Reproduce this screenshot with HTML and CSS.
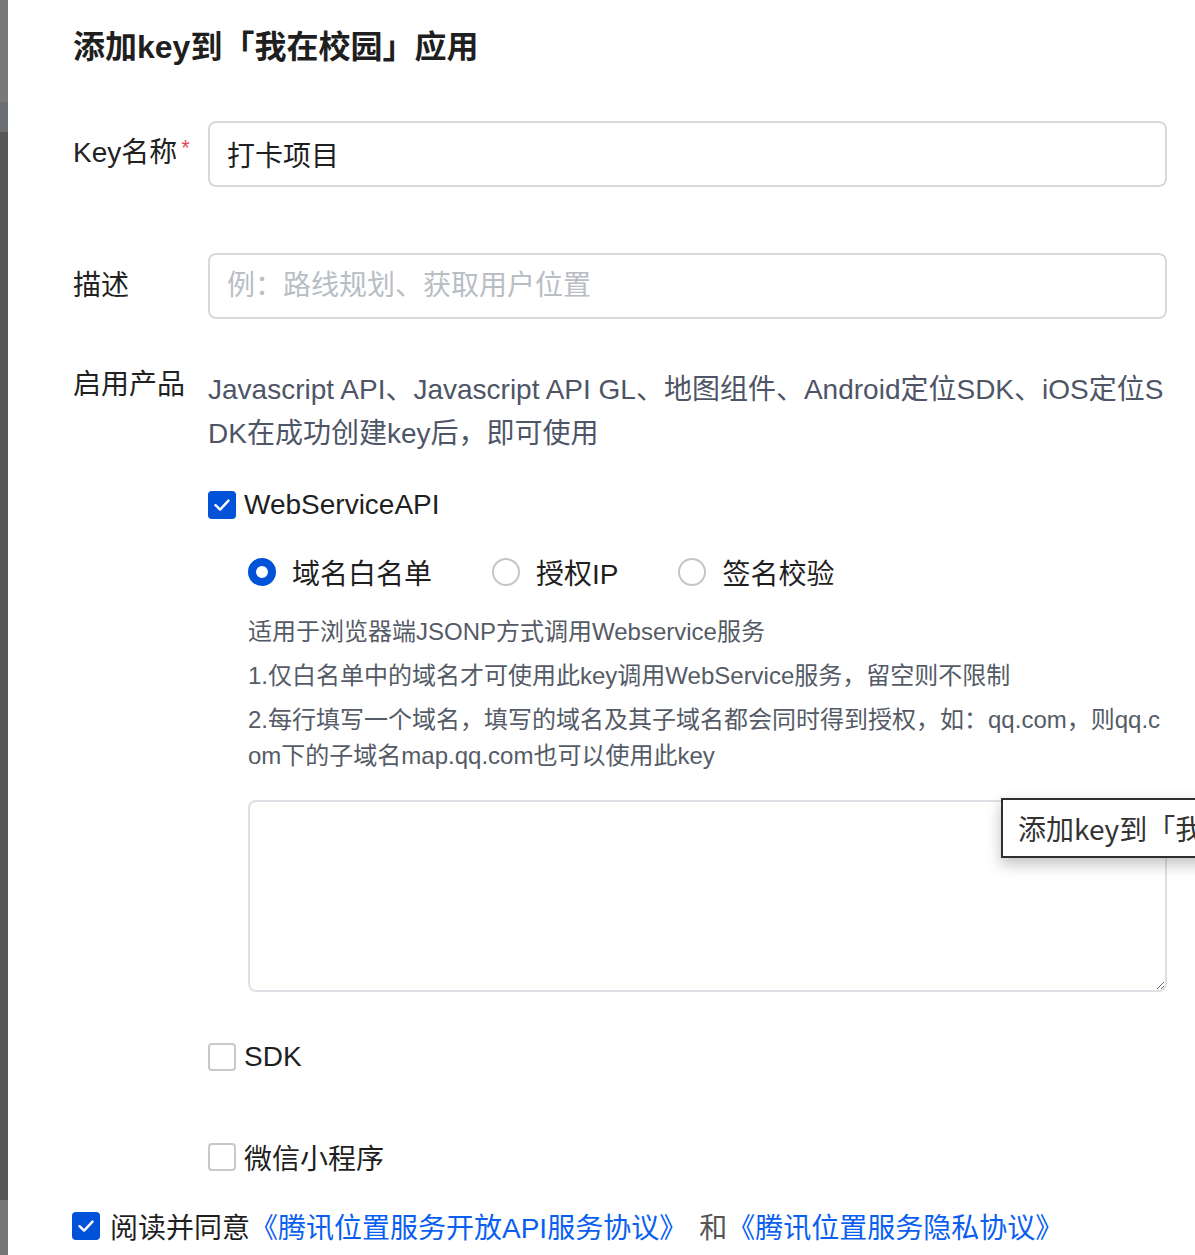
FILE: index.html
```html
<!DOCTYPE html>
<html lang="zh-CN">
<head>
<meta charset="utf-8">
<title>添加key</title>
<link rel="stylesheet" href="styles.css">
</head>
<body>
<div class="page">
  <div class="strip"></div>
  <div class="content">
    <h1 class="title">添加key到「我在校园」应用</h1>

    <div class="row row-name">
      <label class="label">Key名称<span class="req">*</span></label>
      <input class="input" type="text" value="打卡项目">
    </div>

    <div class="row row-desc">
      <label class="label">描述</label>
      <input class="input" type="text" placeholder="例：路线规划、获取用户位置">
    </div>

    <div class="row row-products">
      <label class="label label-products">启用产品</label>
      <div class="products">
        <p class="prod-desc">Javascript API、Javascript API GL、地图组件、Android定位SDK、iOS定位SDK在成功创建key后，即可使用</p>

        <div class="check-row check-ws">
          <span class="cb on"><svg viewBox="0 0 28 28" width="28" height="28"><path d="M7.5 14.2l4.6 4.4 8.4-9" fill="none" stroke="#fff" stroke-width="2.4" stroke-linecap="round" stroke-linejoin="round"/></svg></span>
          <span>WebServiceAPI</span>
        </div>

        <div class="radio-group">
          <div class="radio-item"><span class="radio on"></span><span>域名白名单</span></div>
          <div class="radio-item"><span class="radio"></span><span>授权IP</span></div>
          <div class="radio-item"><span class="radio"></span><span>签名校验</span></div>
        </div>

        <div class="help">
          <p>适用于浏览器端JSONP方式调用Webservice服务</p>
          <p>1.仅白名单中的域名才可使用此key调用WebService服务，留空则不限制</p>
          <p>2.每行填写一个域名，填写的域名及其子域名都会同时得到授权，如：qq.com，则qq.com下的子域名map.qq.com也可以使用此key</p>
        </div>

        <textarea class="domains"></textarea>

        <div class="check-row check-sdk">
          <span class="cb"></span>
          <span>SDK</span>
        </div>

        <div class="check-row check-wx">
          <span class="cb"></span>
          <span>微信小程序</span>
        </div>
      </div>
    </div>

    <div class="agree">
      <span class="cb on"><svg viewBox="0 0 28 28" width="28" height="28"><path d="M7.5 14.2l4.6 4.4 8.4-9" fill="none" stroke="#fff" stroke-width="2.4" stroke-linecap="round" stroke-linejoin="round"/></svg></span>
      <span class="agree-text">阅读并同意</span>
      <a class="link">《腾讯位置服务开放API服务协议》</a>
      <span class="and">和</span>
      <a class="link">《腾讯位置服务隐私协议》</a>
    </div>

    <div class="tooltip">添加key到「我在校园」应用</div>
  </div>
</div>
</body>
</html>
```

FILE: styles.css
```css
* {
  box-sizing: border-box;
}

body {
  margin: 0;
  background: #fff;
  font-family: "Liberation Sans", "Noto Sans CJK SC", sans-serif;
  color: #1f1f1f;
  overflow: hidden;
}

.page {
  display: flex;
  width: 1195px;
  height: 1255px;
  overflow: hidden;
}

.strip {
  width: 8px;
  flex: none;
  background: linear-gradient(to bottom,
    #787878 0, #787878 102px,
    #6b6e72 102px, #6b6e72 132px,
    #575757 132px, #575757 1200px,
    #777777 1200px, #777777 100%);
}

.content {
  flex: 1;
  position: relative;
  padding: 23px 28px 0 65px;
}

.title {
  margin: 0;
  font-size: 32px;
  line-height: 48px;
  font-weight: 700;
  color: #1f1f1f;
}

.row {
  display: flex;
  align-items: center;
}

.label {
  width: 135px;
  flex: none;
  font-size: 28px;
  line-height: 44px;
  color: #222;
}

.req {
  color: #e34d59;
  font-size: 22px;
  position: relative;
  top: -7px;
  margin-left: 4px;
}

.row-name {
  margin-top: 50px;
}

.row-desc {
  margin-top: 66px;
}

.input {
  flex: 1;
  min-width: 0;
  height: 66px;
  border: 2px solid #d9d9d9;
  border-radius: 8px;
  padding: 0 17px;
  font-family: "Liberation Sans", "Noto Sans CJK SC", sans-serif;
  font-size: 28px;
  color: #1f1f1f;
  outline: none;
  background: #fff;
}

.input::placeholder {
  color: #b9bdc4;
}

.row-products {
  align-items: flex-start;
  margin-top: 49px;
}

.label-products {
  line-height: 34px;
}

.products {
  flex: 1;
  min-width: 0;
}

.prod-desc {
  margin: 0;
  font-size: 28px;
  line-height: 44px;
  color: #4e5566;
  word-break: break-all;
}

.check-row {
  display: flex;
  align-items: center;
  gap: 8px;
  height: 44px;
  font-size: 28px;
  color: #1f1f1f;
}

.cb {
  width: 28px;
  height: 28px;
  flex: none;
  border: 2px solid #c8c8c8;
  border-radius: 4px;
  background: #fff;
}

.cb.on {
  display: flex;
  align-items: center;
  justify-content: center;
  border: none;
  background: #0052d9;
}

.check-ws {
  margin-top: 27px;
}

.radio-group {
  display: flex;
  gap: 60px;
  padding-left: 40px;
  margin-top: 23px;
}

.radio-item {
  display: flex;
  align-items: center;
  gap: 16px;
  height: 44px;
  font-size: 28px;
  color: #1f1f1f;
}

.radio {
  width: 28px;
  height: 28px;
  flex: none;
  border-radius: 50%;
  border: 2px solid #c5c5c5;
  background: #fff;
}

.radio.on {
  border: 8px solid #0052d9;
}

.help {
  padding-left: 40px;
  margin-top: 20px;
}

.help p {
  margin: 0 0 8px;
  font-size: 24px;
  line-height: 36px;
  color: #555b66;
  word-break: break-all;
}

.help p:last-child {
  margin-bottom: 0;
}

.domains {
  display: block;
  margin: 26px 0 0 40px;
  width: calc(100% - 40px);
  height: 192px;
  border: 2px solid #dfe0e6;
  border-radius: 8px;
  resize: vertical;
  outline: none;
  font-family: "Liberation Sans", "Noto Sans CJK SC", sans-serif;
  font-size: 24px;
}

.check-sdk {
  margin-top: 43px;
}

.check-wx {
  margin-top: 56px;
}

.agree {
  display: flex;
  align-items: center;
  height: 44px;
  margin-top: 25px;
  margin-left: -1px;
  font-size: 28px;
}

.agree-text {
  margin-left: 10px;
  color: #1f1f1f;
}

.link {
  color: #0a5ff0;
  text-decoration: none;
}

.and {
  color: #555;
  margin: 0 0 0 12px;
}

.tooltip {
  position: absolute;
  left: 993px;
  top: 798px;
  height: 60px;
  padding: 0 15px;
  border: 2px solid #2e2e2e;
  background: #fff;
  box-shadow: 0 6px 14px rgba(0, 0, 0, 0.25);
  font-family: "Noto Sans CJK SC", sans-serif;
  font-size: 28px;
  line-height: 56px;
  color: #333;
  white-space: nowrap;
}
```
